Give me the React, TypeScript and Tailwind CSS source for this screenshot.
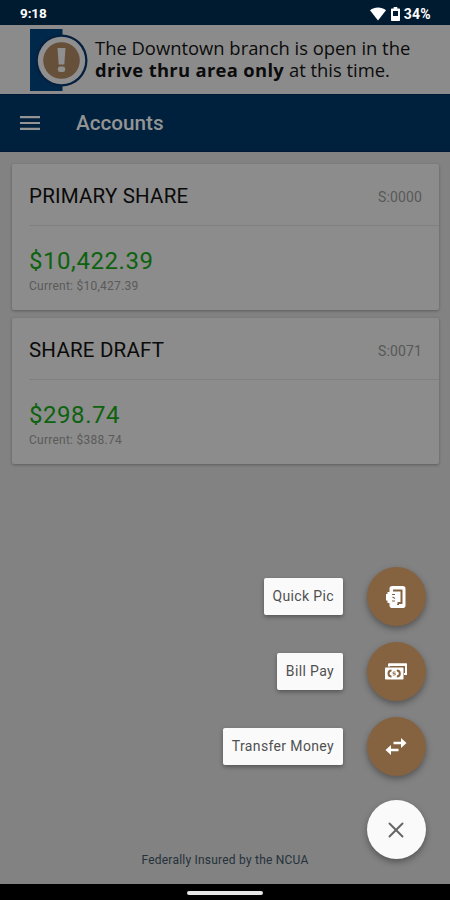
import type { ReactNode } from "react";
import { X } from "lucide-react";

const accounts = [
  { name: "PRIMARY SHARE", id: "S:0000", available: "$10,422.39", current: "$10,427.39" },
  { name: "SHARE DRAFT", id: "S:0071", available: "$298.74", current: "$388.74" },
];

const StatusBar = () => (
  <div className="h-[25px] shrink-0 bg-[#001a30] flex items-center justify-between pl-[20px] pr-[19px] text-white">
    <span className="text-[13.5px] font-bold leading-none tracking-[-0.1px] mt-[3px]">9:18</span>
    <div className="flex items-center mt-[2px]">
      <svg className="w-[16px] h-[14px]" viewBox="0 0 16 14" fill="currentColor">
        <path d="M0 3.2C4.600-.4 11.400-.4 16 3.200L8 13.500Z" />
      </svg>
      <svg className="w-[9px] h-[14px] ml-[5px]" viewBox="0 0 9 14" fill="currentColor">
        <path
          fillRule="evenodd"
          d="M2.700 0h3.600v1.500H8c.6 0 1 .4 1 1V13c0 .6-.4 1-1 1H1c-.6 0-1-.4-1-1V2.500c0-.6.4-1 1-1h1.700ZM2 4v5h5V4Z"
        />
      </svg>
      <span className="text-[14px] font-bold leading-none tracking-[0.3px] ml-[4px]">34%</span>
    </div>
  </div>
);

const Banner = () => (
  <div className="h-[69px] shrink-0 bg-[#8b8b8b] flex items-center pl-[30px] text-[#0b0b0b]">
    <svg className="w-[58px] h-[62px] shrink-0" viewBox="0 0 58 62">
      <rect width="32.500" height="62" fill="#00284b" />
      <circle cx="31.500" cy="31.500" r="26" fill="#06203f" />
      <circle cx="31.500" cy="31.500" r="23.700" fill="#8f8f8f" />
      <circle cx="31.500" cy="31.500" r="18.300" fill="#66503a" />
      <path d="M27.500 19h8l-1.200 16.500h-5.600Z" fill="#8f8f8f" />
      <rect x="27.800" y="37.500" width="7.400" height="5.600" rx="2.400" fill="#8f8f8f" />
    </svg>
    <p className="ml-[7px] -mt-[2px] font-['Open_Sans','Noto_Sans',sans-serif] text-[18.4px] leading-[22px] whitespace-nowrap">
      <span className="block">The Downtown branch is open in the</span>
      <span className="block">
        <b className="tracking-[0.32px]">drive thru area only</b> at this time.
      </span>
    </p>
  </div>
);

const AccountCard = ({ name, id, available, current }: (typeof accounts)[number]) => (
  <div className="h-[146px] bg-[#8c8c8c] rounded-[2px] shadow-[0_1px_3px_rgba(0,0,0,0.3)]">
    <div className="h-[62px] ml-[17px] pr-[17px] flex items-center justify-between border-b border-[#808080]">
      <h2 className="text-[20.5px] tracking-[0.2px] text-[#0a0a0a] mt-[3px]">{name}</h2>
      <span className="text-[14px] tracking-[0.15px] text-[#585858] mt-[6px]">{id}</span>
    </div>
    <div className="pl-[17px] pt-[20px]">
      <p className="text-[24px] leading-[30px] tracking-[0.55px] text-[#0d620f]">{available}</p>
      <p className="text-[12px] leading-[20px] tracking-[0.25px] text-[#5a5a5a]">Current: {current}</p>
    </div>
  </div>
);

const MenuIcon = () => (
  <svg className="w-[20px] h-[14px]" viewBox="0 0 20 14" fill="currentColor">
    <path d="M0 0h20v2.200H0zM0 5.900h20v2.200H0zM0 11.800h20v2.200H0z" />
  </svg>
);

const QuickPicIcon = () => (
  <svg className="w-[20px] h-[22px]" viewBox="0 0 20 22" fill="none">
    <rect x="3.500" width="16" height="22" rx="2.800" fill="white" />
    <path d="M1.500 6H5v11H1.500v-2.500H0V8h1.500Z" fill="white" />
    <path d="M7 4.500h8.500v12.500h-4" stroke="#856341" strokeWidth="2" />
    <path d="M6 8.500h3M6.500 11l2.500 1.500M6 15h3M11 18.500h2" stroke="#856341" strokeWidth="1.100" />
  </svg>
);

const BillPayIcon = () => (
  <svg className="w-[22px] h-[17px]" viewBox="0 0 22 17" fill="none">
    <path d="M4 3.500V1.500h17v9.500h-2" stroke="white" strokeWidth="2" />
    <path d="M4 .5h17.500v2.500H4z" fill="white" />
    <rect y="4.500" width="18.500" height="12" rx="0.800" fill="white" />
    <path d="M6.500 7.500C2.500 7.500 2.500 13.500 6.500 13.500M11.800 7.500c4 0 4 6 0 6" stroke="#856341" strokeWidth="2" />
    <path d="M10.500 9H8v1.500h2.300V12H7.700" stroke="#856341" strokeWidth="0.800" />
  </svg>
);

const TransferIcon = () => (
  <svg className="w-[22px] h-[17px]" viewBox="0 0 22 17" fill="none">
    <path d="M8.500 5H17M5 12h8.500" stroke="white" strokeWidth="2.400" />
    <path d="M16 0l5.500 5L16 10ZM6 7L.5 12 6 17Z" fill="white" />
  </svg>
);

const SpeedDialItem = ({ label, children }: { label: string; children: ReactNode }) => (
  <div className="flex items-center gap-[24px]">
    <span className="h-[37px] pl-[9px] pr-[9px] flex items-center bg-[#fafafa] rounded-[2px] text-[14px] tracking-[0.36px] text-[#505050] whitespace-nowrap shadow-[0_2px_4px_rgba(0,0,0,0.35)]">
      {label}
    </span>
    <button
      aria-label={label}
      className="w-[59px] h-[59px] pr-[2px] rounded-full bg-[#856341] flex items-center justify-center shadow-[0_3px_6px_rgba(0,0,0,0.35)]"
    >
      {children}
    </button>
  </div>
);

export default function App() {
  return (
    <div className="relative h-[900px] w-[450px] overflow-hidden flex flex-col bg-[#828282] font-[Roboto,sans-serif]">
      <StatusBar />
      <Banner />

      <header className="h-[58px] shrink-0 bg-[#00213d] border-t border-b border-[#001638] flex items-center pl-[20px] text-[#949494]">
        <MenuIcon />
        <h1 className="ml-[36px] mt-[2px] text-[20.7px] font-medium">Accounts</h1>
      </header>

      <main className="flex-1 flex flex-col gap-[8px] pt-[12px] pl-[12px] pr-[11px]">
        {accounts.map((account) => (
          <AccountCard key={account.id} {...account} />
        ))}
      </main>

      <footer className="shrink-0">
        <p className="text-center text-[12px] leading-[18px] tracking-[0.22px] text-[#25313b] mb-[15px]">
          Federally Insured by the NCUA
        </p>
        <div className="h-[16px] bg-black flex items-center justify-center">
          <div className="w-[76px] h-[4px] rounded-full bg-[#e6e6e6] mt-[2px]" />
        </div>
      </footer>

      {/* Speed dial */}
      <div className="absolute right-[24px] bottom-[41px] flex flex-col items-end gap-[16px]">
        <SpeedDialItem label="Quick Pic">
          <QuickPicIcon />
        </SpeedDialItem>
        <SpeedDialItem label="Bill Pay">
          <BillPayIcon />
        </SpeedDialItem>
        <SpeedDialItem label="Transfer Money">
          <TransferIcon />
        </SpeedDialItem>
        <button
          aria-label="Close"
          className="mt-[8px] w-[59px] h-[59px] pr-[2px] rounded-full bg-[#fafafa] text-[#666] flex items-center justify-center shadow-[0_3px_6px_rgba(0,0,0,0.35)]"
        >
          <X className="w-[26px] h-[26px]" strokeWidth={1.8} />
        </button>
      </div>
    </div>
  );
}
